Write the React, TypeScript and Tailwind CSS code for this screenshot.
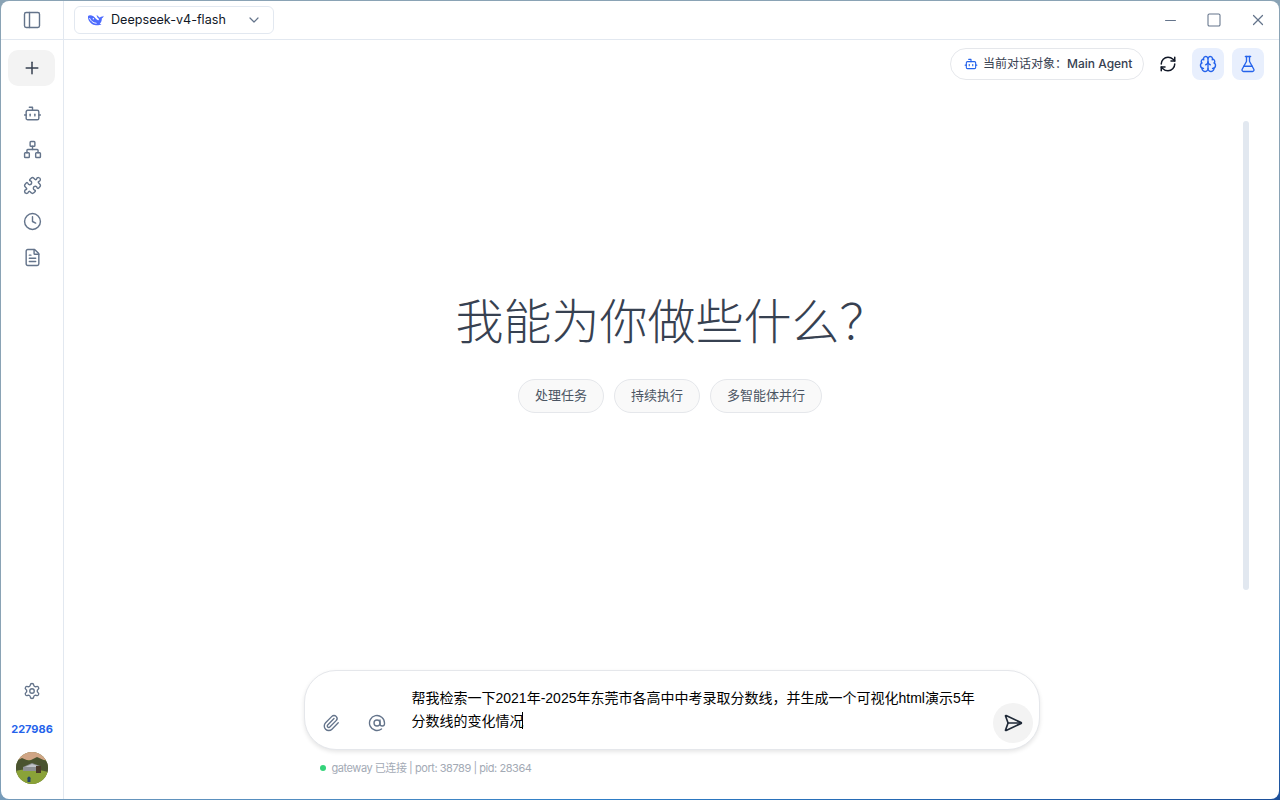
import {
  AtSign,
  Bot,
  Brain,
  ChevronDown,
  Clock,
  FileText,
  FlaskConical,
  Minus,
  Network,
  PanelLeft,
  Paperclip,
  Plus,
  Puzzle,
  RefreshCw,
  SendHorizontal,
  Settings,
  Square,
  X,
} from "lucide-react";

const navIcons = [Bot, Network, Puzzle, Clock, FileText];

const Whale = () => (
  <svg viewBox="0 0 24 18" className="h-[13px] w-[17px] shrink-0">
    <path
      fill="#4d6bfe"
      d="M1.500 2.500C3 1 6 1 9 3c2.500 1.700 4 4.500 6.500 5.500.8.300 1.200 0 1.300-.6.200-1-.3-1.500-1.300-2.300-1.200-1-1.800-2.400-1.800-4 0-.4.500-.5.700 0 .4 1.200 1.600 1.500 2.600 2.300.4.300.7.700.8 1.200C19 4.100 20.500 3.500 22 3.400l1.500-1.200c-.1 1.700-1 3-2.500 3.600 0 3.500-1 6-3 7.500.6.600 1.500.9 2.500 1-2.500 1.300-6 2-9.500 1.200C5.500 14.300.5 8 1.500 2.500z"
    />
    <circle cx="9" cy="6.500" r="1" fill="#fff" />
    <path d="M3.500 5.500c1.500 4 5 7 10 7.500" stroke="#fff" strokeWidth="1.300" fill="none" />
  </svg>
);

const Avatar = () => (
  <svg viewBox="0 0 32 32" className="h-8 w-8 rounded-full">
    <rect width="32" height="32" fill="#6f7a3a" />
    <rect width="32" height="8" fill="#d0a585" />
    <path d="M0 9l6-3 7 3 8-4 11 5v12H0z" fill="#4a5430" />
    <path d="M0 19c8-2 20-2 32 1v12H0z" fill="#8aa238" />
    <path d="M7 15l9-4 8 3v5H7z" fill="#8d9094" />
    <path d="M9 15l7-3 6 2v1H9z" fill="#c0c3c8" />
    <rect x="20" y="14" width="5" height="7" fill="#4a3a2a" />
    <circle cx="13" cy="26" r="1.500" fill="#24456b" />
    <rect x="11.500" y="26" width="3" height="4" fill="#24456b" />
  </svg>
);

const Sidebar = () => (
  <aside className="flex w-[63px] shrink-0 flex-col items-center border-r border-[#e2e8f0]">
    <button className="mt-[10px] mr-px flex h-9 w-[47px] items-center justify-center rounded-[10px] bg-[#f3f3f3] text-[#374151]">
      <Plus size={20} strokeWidth={1.8} />
    </button>
    <nav className="mt-[9px] flex flex-col">
      {navIcons.map((Icon, i) => (
        <span key={i} className="flex h-9 w-9 items-center justify-center text-[#64748b]">
          <Icon size={19} strokeWidth={1.8} />
        </span>
      ))}
    </nav>
    <div className="mt-auto flex flex-col items-center pb-[15px]">
      <Settings size={18} strokeWidth={1.8} className="text-[#64748b]" />
      <span className="mt-[21px] text-[11px] leading-4 font-bold text-[#2563eb]">227986</span>
      <div className="mt-[15px] h-8 w-8">
        <Avatar />
      </div>
    </div>
  </aside>
);

const TitleBar = () => (
  <header className="flex h-[39px] shrink-0 items-center border-b border-[#e2e8f0]">
    <div className="flex h-full w-[63px] shrink-0 items-center justify-center border-r border-[#e2e8f0] text-[#64748b]">
      <PanelLeft size={20} strokeWidth={1.7} />
    </div>
    <div className="ml-[10px] flex h-7 w-[200px] items-center rounded-md border border-[#e2e8f0] pr-[11px] pl-3">
      <Whale />
      <span className="ml-[7px] text-[12.6px] text-[#111827]">Deepseek-v4-flash</span>
      <ChevronDown size={16} strokeWidth={1.8} className="ml-auto text-[#64748b]" />
    </div>
    <div className="mr-[-1px] ml-auto flex items-center text-[#64748b]">
      <span className="flex w-11 justify-center">
        <Minus size={17} strokeWidth={1.6} />
      </span>
      <span className="flex w-11 justify-center">
        <Square size={16} strokeWidth={1.6} />
      </span>
      <span className="flex w-11 justify-center">
        <X size={18} strokeWidth={1.6} />
      </span>
    </div>
  </header>
);

const ActionRow = () => (
  <div className="flex shrink-0 items-center justify-end pt-2 pr-[15px]">
    <div className="flex h-8 w-[194px] items-center rounded-full border border-[#e5e7eb] pl-[13px]">
      <Bot size={14} strokeWidth={1.9} className="text-[#2563eb]" />
      <span className="ml-[5px] text-xs whitespace-nowrap text-[#374151]">
        当前对话对象：<span className="font-medium">Main Agent</span>
      </span>
    </div>
    <span className="ml-2 flex h-8 w-8 items-center justify-center text-[#111827]">
      <RefreshCw size={18} strokeWidth={2} />
    </span>
    <span className="ml-2 flex h-8 w-8 items-center justify-center rounded-lg bg-[#e8effd] text-[#2563eb]">
      <Brain size={18} strokeWidth={1.8} />
    </span>
    <span className="ml-2 flex h-8 w-8 items-center justify-center rounded-lg bg-[#e8effd] text-[#2563eb]">
      <FlaskConical size={18} strokeWidth={1.8} />
    </span>
  </div>
);

const Pill = ({ label }: { label: string }) => (
  <span className="flex h-[34px] items-center rounded-full border border-[#e5e7eb] bg-[#f9f9f9] px-4 text-[13px] text-[#4b5563]">
    {label}
  </span>
);

const Composer = () => (
  <div className="flex shrink-0 flex-col items-center">
    <div className="flex h-20 w-[736px] rounded-[32px] border border-[#e5e7eb] bg-white shadow-[0_2px_4px_rgba(0,0,0,0.10)]">
      <div className="flex w-[106px] shrink-0 items-end pb-[17px] pl-[17px] text-[#64748b]">
        <Paperclip size={18} strokeWidth={1.8} />
        <AtSign size={18} strokeWidth={1.8} className="ml-[28px]" />
      </div>
      <div className="w-[566px] pt-4 pl-px font-['Liberation_Sans','Noto_Sans_CJK_SC',sans-serif] text-sm leading-[22px] text-black">
        帮我检索一下2021年-2025年东莞市各高中中考录取分数线，并生成一个可视化html演示5年分数线的变化情况
        <span className="ml-[-2px] inline-block h-[17px] w-px translate-y-[3px] bg-black" />
      </div>
      <div className="ml-auto flex items-end pr-[6px] pb-[6px]">
        <span className="flex h-10 w-10 items-center justify-center rounded-full bg-[#f3f3f3] text-[#1f2937]">
          <SendHorizontal size={20} strokeWidth={2} />
        </span>
      </div>
    </div>
    <div className="mt-[11px] mb-[24px] flex w-[736px] items-center pl-4 text-[11px] leading-[14px] tracking-[-0.45px] text-[#a3aab5]">
      <span className="h-[6px] w-[6px] rounded-full bg-[#34d37a]" />
      <span className="ml-[6px]">gateway 已连接 | port: 38789 | pid: 28364</span>
    </div>
  </div>
);

export default function App() {
  return (
    <div className="h-screen w-screen overflow-hidden bg-[linear-gradient(170deg,#8aa3b5_0%,#8aa3b5_75%,#2f7fc8_88%,#1c4f9a_100%)] p-px">
      <div className="flex h-full w-full flex-col overflow-hidden rounded-[8px] bg-white font-['Inter','Noto_Sans_CJK_SC',sans-serif]">
        <TitleBar />
        <div className="flex min-h-0 flex-1">
          <Sidebar />
          <main className="relative flex min-w-0 flex-1 flex-col">
            <ActionRow />
            <div className="flex flex-1 flex-col items-center pt-[207px]">
              <h1 className="font-['Liberation_Serif','Noto_Sans_CJK_SC',serif] text-5xl leading-[72px] font-light text-[#374151]">
                我能为你做些什么？
              </h1>
              <div className="mt-[20px] mr-[3px] flex gap-[10px]">
                <Pill label="处理任务" />
                <Pill label="持续执行" />
                <Pill label="多智能体并行" />
              </div>
            </div>
            <Composer />
            <div className="absolute top-[81px] right-[30px] h-[469px] w-[6px] rounded-full bg-[#e2e8f0]" />
          </main>
        </div>
      </div>
    </div>
  );
}
